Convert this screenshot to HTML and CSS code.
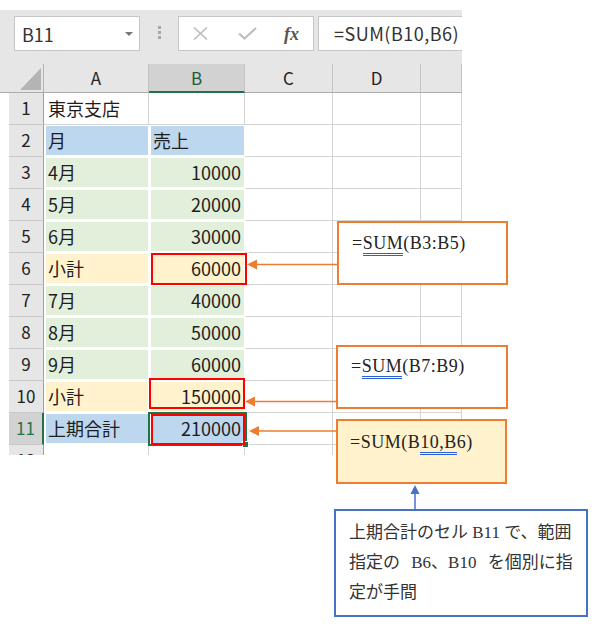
FILE: index.html
```html
<!DOCTYPE html>
<html lang="ja">
<head>
<meta charset="utf-8">
<link rel="stylesheet" href="styles.css">
</head>
<body>
<div class="page">
  <div class="excel">
    <div class="toolbar">
      <div class="namebox"><span>B11</span><span class="caret"></span></div>
      <div class="grip"><i></i><i></i><i></i></div>
      <div class="fxbtns">
        <svg class="ic-x" width="15" height="13" viewBox="0 0 15 13"><path d="M1 0.5L14 12.5M14 0.5L1 12.5" stroke="#bdbdbd" stroke-width="1.6" fill="none"/></svg>
        <svg class="ic-ok" width="19" height="13" viewBox="0 0 19 13"><path d="M1 6.5L6.5 11.5L18 1" stroke="#bdbdbd" stroke-width="2.2" fill="none"/></svg>
        <span class="fx">fx</span>
      </div>
      <div class="formula">=SUM(B10,B6)</div>
    </div>
    <div class="grid">
      <div class="corner"><div class="tri"></div></div>
      <div class="ch">A</div><div class="ch sel">B</div><div class="ch">C</div><div class="ch">D</div><div class="ch"></div>

      <div class="lg"></div><div class="rh">1</div><div class="c">東京支店</div><div class="c"></div><div class="c"></div><div class="c"></div><div class="c"></div>
      <div class="lg"></div><div class="rh">2</div><div class="c f blue">月</div><div class="c f blue">売上</div><div class="c"></div><div class="c"></div><div class="c"></div>
      <div class="lg"></div><div class="rh">3</div><div class="c f green">4月</div><div class="c f green num">10000</div><div class="c"></div><div class="c"></div><div class="c"></div>
      <div class="lg"></div><div class="rh">4</div><div class="c f green">5月</div><div class="c f green num">20000</div><div class="c"></div><div class="c"></div><div class="c"></div>
      <div class="lg"></div><div class="rh">5</div><div class="c f green">6月</div><div class="c f green num">30000</div><div class="c"></div><div class="c"></div><div class="c"></div>
      <div class="lg"></div><div class="rh">6</div><div class="c f yellow">小計</div><div class="c f yellow num">60000</div><div class="c"></div><div class="c"></div><div class="c"></div>
      <div class="lg"></div><div class="rh">7</div><div class="c f green">7月</div><div class="c f green num">40000</div><div class="c"></div><div class="c"></div><div class="c"></div>
      <div class="lg"></div><div class="rh">8</div><div class="c f green">8月</div><div class="c f green num">50000</div><div class="c"></div><div class="c"></div><div class="c"></div>
      <div class="lg"></div><div class="rh">9</div><div class="c f green">9月</div><div class="c f green num">60000</div><div class="c"></div><div class="c"></div><div class="c"></div>
      <div class="lg"></div><div class="rh">10</div><div class="c f yellow">小計</div><div class="c f yellow num">150000</div><div class="c"></div><div class="c"></div><div class="c"></div>
      <div class="lg"></div><div class="rh sel">11</div><div class="c f blue">上期合計</div><div class="c f blue num">210000</div><div class="c"></div><div class="c"></div><div class="c"></div>
      <div class="lg"></div><div class="rh">12</div><div class="c"></div><div class="c"></div><div class="c"></div><div class="c"></div><div class="c"></div>
    </div>
  </div>

  <div class="selbox"></div>
  <div class="handle"></div>
  <div class="red red6"></div>
  <div class="red red10"></div>
  <div class="red red11"></div>

  <div class="note n1">=<span class="dbl">SUM</span>(B3:B5)</div>
  <div class="note n2">=<span class="dbl">SUM</span>(B7:B9)</div>
  <div class="note n3">=SUM(B<span class="dbl">10,B</span>6)</div>

  <div class="memo">
    <span class="ln">上期合計のセル B11 で、範囲</span>
    <span class="ln l2">指定の B6、B10 を個別に指</span>
    <span class="ln">定が手間</span>
  </div>

  <svg class="arrows" width="594" height="625" viewBox="0 0 594 625">
    <line x1="338" y1="264.5" x2="255" y2="264.5" stroke="#ed7d31" stroke-width="1.5"/>
    <polygon points="247,264.5 257,259.5 257,269.5" fill="#ed7d31"/>
    <line x1="337" y1="401.5" x2="253" y2="401.5" stroke="#ed7d31" stroke-width="1.5"/>
    <polygon points="245,401.5 255,396.5 255,406.5" fill="#ed7d31"/>
    <line x1="337" y1="431" x2="257" y2="431" stroke="#ed7d31" stroke-width="1.5"/>
    <polygon points="249,431 259,426 259,436" fill="#ed7d31"/>
    <line x1="415" y1="492" x2="415" y2="510" stroke="#4472c4" stroke-width="1.5"/>
    <polygon points="415,485 410.5,494 419.5,494" fill="#4472c4"/>
  </svg>
</div>
</body>
</html>
```

FILE: styles.css
```css
* { box-sizing: border-box; }
html, body { margin: 0; padding: 0; background: #fff; }
body {
  width: 594px;
  height: 625px;
  overflow: hidden;
  font-family: "Noto Sans CJK JP", "Noto Sans", sans-serif;
}
.page { position: relative; width: 594px; height: 625px; padding-top: 10px; }

.excel { width: 462px; overflow: hidden; }

.toolbar {
  height: 54px;
  background: #e6e6e6;
  display: flex;
  align-items: flex-start;
  padding: 6px 0 0 14px;
}
.namebox {
  flex: 0 0 126px;
  height: 35px;
  background: #fff;
  border: 1px solid #c6c6c6;
  display: flex;
  align-items: center;
  justify-content: space-between;
  padding: 0 6px 0 7px;
  font-size: 18px;
  color: #333;
}
.caret {
  width: 0; height: 0;
  border-left: 4px solid transparent;
  border-right: 4px solid transparent;
  border-top: 4px solid #777;
}
.grip {
  flex: 0 0 38px;
  height: 35px;
  display: flex;
  flex-direction: column;
  align-items: center;
  gap: 2px;
  padding-top: 10px;
}
.grip i { display: block; width: 3px; height: 3px; background: #a8a8a8; }
.fxbtns {
  flex: 0 0 136px;
  height: 35px;
  background: #fff;
  border: 1px solid #c6c6c6;
  display: flex;
  align-items: center;
  padding-left: 14px;
}
.ic-ok { margin-left: 30px; }
.fx {
  margin-left: 27px;
  font-family: "Liberation Serif", serif;
  font-style: italic;
  font-weight: bold;
  font-size: 18px;
  color: #555;
  line-height: 1;
}
.formula {
  flex: 0 0 300px;
  margin-left: 4px;
  height: 35px;
  background: #fff;
  border: 1px solid #c6c6c6;
  padding-left: 15px;
  font-size: 18px;
  line-height: 32px;
  letter-spacing: 0.5px;
  color: #333;
  white-space: nowrap;
}

.grid {
  display: grid;
  grid-template-columns: 9px 35px 105px 96px 88px 88px 41px;
  grid-template-rows: 29px repeat(12, 32px);
  height: 391px;
  overflow: hidden;
  font-size: 18px;
  color: #1e1e1e;
}
.corner {
  grid-column: 1 / span 2;
  background: #e6e6e6;
  border-right: 1px solid #b4b4b4;
  border-bottom: 1px solid #ababab;
  display: flex;
  justify-content: flex-end;
  align-items: flex-end;
  padding: 0 2px 2px 0;
}
.tri {
  width: 21px;
  height: 22px;
  background: #b4b4b4;
  clip-path: polygon(100% 0, 100% 100%, 0 100%);
}
.ch {
  background: #e6e6e6;
  border-right: 1px solid #c4c4c4;
  border-bottom: 1px solid #ababab;
  text-align: center;
  font-size: 17px;
  line-height: 27px;
  color: #222;
}
.ch.sel {
  background: #d2d2d2;
  border-bottom: 2px solid #217346;
  color: #1d5b3a;
}
.lg { background: #fff; }
.rh {
  background: #e6e6e6;
  border-right: 1px solid #a0a0a0;
  border-bottom: 1px solid #c8c8c8;
  text-align: center;
  font-size: 17px;
  line-height: 30px;
  color: #222;
}
.rh.sel {
  background: #d2d2d2;
  color: #217346;
  border-right: 2px solid #217346;
}
.c {
  border-right: 1px solid #d4d4d4;
  border-bottom: 1px solid #d4d4d4;
  line-height: 30px;
  padding: 0 3px 0 4px;
  white-space: nowrap;
  overflow: hidden;
}
.num { text-align: right; }
.f {
  border-color: #fff;
  box-shadow: inset 2px 1px 0 #fff, inset 0 -1px 0 #fff;
}
.blue { background: #bdd7ee; }
.green { background: #e2efda; }
.yellow { background: #fff2cc; }

.selbox {
  position: absolute;
  left: 148px; top: 412px;
  width: 99px; height: 34px;
  border: 2px solid #217346;
}
.handle {
  position: absolute;
  left: 242px; top: 441px;
  width: 7px; height: 7px;
  background: #217346;
  border: 1px solid #fff;
}
.red {
  position: absolute;
  border: 2px solid #ff0000;
}
.red6 { left: 151px; top: 253px; width: 96px; height: 32px; }
.red10 { left: 149px; top: 378px; width: 96px; height: 31px; }
.red11 { left: 151px; top: 414px; width: 94px; height: 31px; }

.note {
  position: absolute;
  border: 2px solid #ed7d31;
  background: #fff;
  font-family: "Liberation Serif", serif;
  font-size: 18px;
  letter-spacing: 0.5px;
  line-height: 24px;
  color: #222;
  white-space: nowrap;
}
.n1 { left: 337px; top: 221px; width: 171px; height: 64px; padding: 8px 0 0 13px; }
.n2 { left: 336px; top: 345px; width: 172px; height: 64px; padding: 7px 0 0 13px; }
.n3 { left: 336px; top: 419px; width: 171px; height: 65px; padding: 9px 0 0 12px; background: #fff2cc; }
.dbl { border-bottom: 3px double #2b5fd9; }

.memo {
  position: absolute;
  left: 334px; top: 509px;
  width: 254px; height: 108px;
  border: 2px solid #4472c4;
  background: #fff;
  padding: 7px 13px;
  font-family: "Liberation Serif", "Noto Sans CJK JP", serif;
  font-size: 17px;
  line-height: 30px;
  color: #333;
}
.ln { display: block; white-space: nowrap; }
.l2 { word-spacing: 7px; }

.arrows { position: absolute; left: 0; top: 0; pointer-events: none; }
```
